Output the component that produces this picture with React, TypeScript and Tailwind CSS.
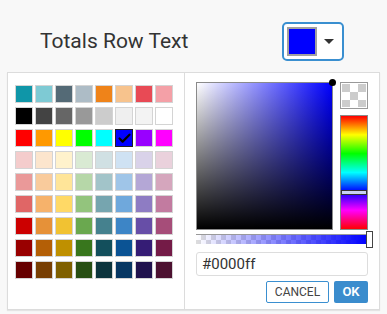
import { Check } from 'lucide-react';

const SWATCHES: string[][] = [
  ['#0f96a8', '#7ecad4', '#546a76', '#adbcc6', '#ef8319', '#f7c38d', '#e84a55', '#f4a0a7'],
  ['#000000', '#434343', '#666666', '#999999', '#cccccc', '#efefef', '#f3f3f3', '#ffffff'],
  ['#ff0000', '#ff9900', '#ffff00', '#00ff00', '#00ffff', '#0000ff', '#9900ff', '#ff00ff'],
  ['#f4cccc', '#fce5cd', '#fff2cc', '#d9ead3', '#d0e0e3', '#cfe2f3', '#d9d2e9', '#ead1dc'],
  ['#ea9999', '#f9cb9c', '#ffe599', '#b6d7a8', '#a2c4c9', '#9fc5e8', '#b4a7d6', '#d5a6bd'],
  ['#e06666', '#f6b26b', '#ffd966', '#93c47d', '#76a5af', '#6fa8dc', '#8e7cc3', '#c27ba0'],
  ['#cc0000', '#e69138', '#f1c232', '#6aa84f', '#45818e', '#3d85c6', '#674ea7', '#a64d79'],
  ['#990000', '#b45f06', '#bf9000', '#38761d', '#134f5c', '#0b5394', '#351c75', '#741b47'],
  ['#660000', '#783f04', '#7f6000', '#274e13', '#0c343d', '#073763', '#20124d', '#4c1130'],
];

const SELECTED = '#0000ff';

export default function App() {
  return (
    <div className="h-[314px] w-[387px] overflow-hidden bg-[#f8f8f8] font-['Roboto',sans-serif]">
      {/* label + trigger */}
      <div className="flex items-center pl-[40px] pr-[43px] pt-[22px]">
        <span className="text-[21px] leading-none text-[#333]">Totals Row Text</span>
        <button className="ml-auto flex h-[39px] items-center rounded-[5px] border-2 border-[#3a8fd0] bg-white pl-[3px] pr-[8px]">
          <span className="h-[29px] w-[30px] border-2 border-[#a0a0a0] bg-[#0000ff]" />
          <span className="ml-[7px] h-0 w-0 border-x-[5px] border-t-[5px] border-x-transparent border-t-[#333]" />
        </button>
      </div>

      {/* picker popup */}
      <div className="mx-[7px] mt-[11px] flex h-[238px] border border-[#dcdcdc] bg-white shadow-[0_1px_1px_rgba(0,0,0,0.08)]">
        <div className="w-[177px] border-r border-[#dcdcdc] pl-[7px] pt-[12px]">
          <div className="grid grid-cols-[repeat(8,18px)] gap-x-[2px] gap-y-[4px]">
            {SWATCHES.flat().map((c, i) => {
              const sel = c === SELECTED;
              return (
                <div
                  key={i}
                  className={`flex h-[18px] w-[18px] items-center justify-center border ${sel ? 'border-[#222]' : 'border-[#d4d4d4]'}`}
                  style={{ backgroundColor: c }}
                >
                  {sel && <Check size={15} strokeWidth={3.5} color="#000" />}
                </div>
              );
            })}
          </div>
        </div>

        <div className="flex-1 pl-[11px] pr-[10px] pt-[9px]">
          <div className="flex gap-[7px]">
            <div className="relative h-[148px] w-[137px] border border-[#8a8a8a] bg-[#0000ff]">
              <div className="h-full w-full bg-linear-to-r from-white to-transparent">
                <div className="h-full w-full bg-linear-to-t from-black to-transparent" />
              </div>
              <span className="absolute right-[-4px] top-[-4px] h-[7px] w-[7px] rounded-full bg-black" />
            </div>
            <div className="flex w-[28px] flex-col">
              <div className="h-[27px] border border-[#999] bg-white p-px">
                <div className="h-full w-full bg-[conic-gradient(#fff_25%,#ccc_0_50%,#fff_0_75%,#ccc_0)] bg-[length:16px_16px]" />
              </div>
              <div className="relative mt-[6px] h-[115px] border border-[#8a8a8a] bg-[linear-gradient(to_bottom,#f00,#ff0,#0f0,#0ff,#00f,#f0f,#f00)]">
                <span className="absolute left-0 right-0 top-[74px] h-[5px] border border-[#333] bg-[#c8d2f4]" />
              </div>
            </div>
          </div>

          <div className="relative mt-[4px] h-[10px] w-[172px] border-t border-[#999] bg-[conic-gradient(#ddd_25%,#fff_0_50%,#ddd_0_75%,#fff_0)] bg-[length:10px_10px]">
            <div className="h-full w-full bg-linear-to-r from-transparent to-[#0000ff]" />
            <span className="absolute right-[-5px] top-[-4px] h-[17px] w-[7px] border border-[#444] bg-white" />
          </div>

          <div className="mt-[8px] flex h-[24px] w-[172px] items-center rounded-[3px] border border-[#ddd] px-[5px] text-[15px] text-[#333]">
            #0000ff
          </div>

          <div className="mt-[5px] flex w-[172px] justify-end gap-[5px]">
            <button className="h-[22px] w-[63px] rounded-[2px] border border-[#3a8fd0] bg-white text-[12px] text-[#444]">
              CANCEL
            </button>
            <button className="h-[22px] w-[34px] rounded-[2px] bg-[#3a8ccd] text-[13px] font-semibold text-white">
              OK
            </button>
          </div>
        </div>
      </div>
    </div>
  );
}
